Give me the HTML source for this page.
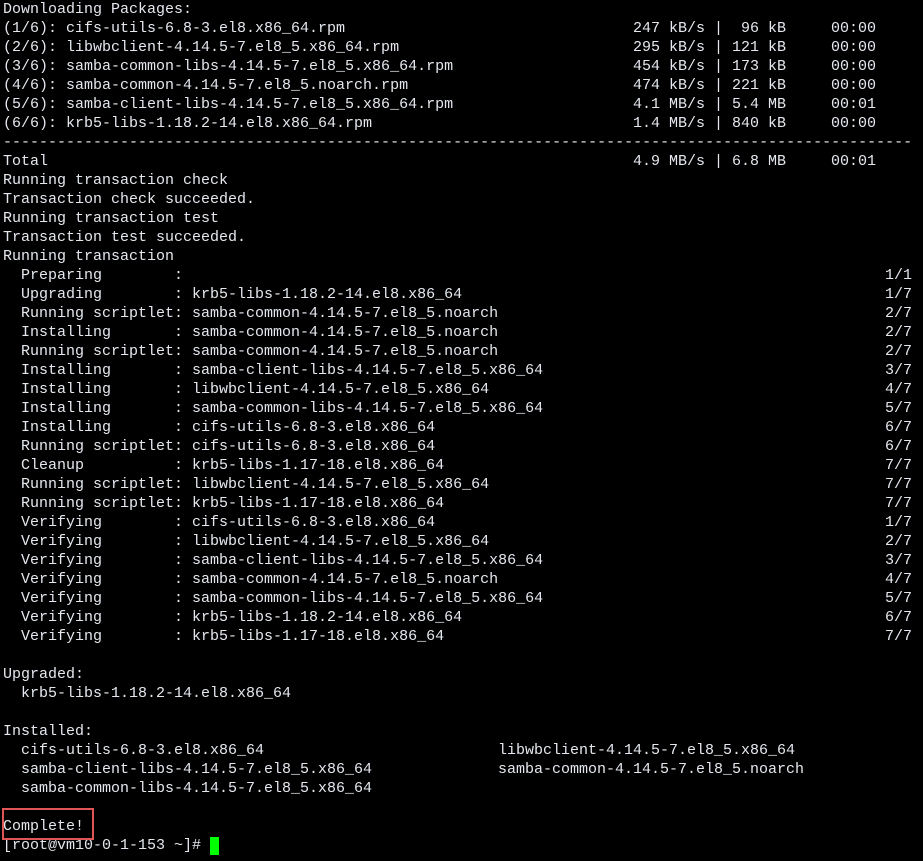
<!DOCTYPE html>
<html><head><meta charset="utf-8"><style>
html,body{margin:0;padding:0;background:#000;width:923px;height:861px;overflow:hidden}
#t{position:absolute;left:3px;top:0;font-family:"Liberation Mono",monospace;font-size:15px;color:#e4e8ee}
.l{position:relative;height:19px;line-height:19px;white-space:pre}
.r{position:absolute;top:0}
.c70{left:630px}.c98{left:882px}.c55{left:495px}
#box{position:absolute;left:2px;top:808px;width:88px;height:28px;border:2px solid #e05555}
#cur{position:absolute;left:210px;top:837px;width:9px;height:18px;background:#00ff00}
</style></head><body>
<div id="t"><div class="l">Downloading Packages:</div><div class="l">(1/6): cifs-utils-6.8-3.el8.x86_64.rpm<span class="r c70">247 kB/s |  96 kB     00:00</span></div><div class="l">(2/6): libwbclient-4.14.5-7.el8_5.x86_64.rpm<span class="r c70">295 kB/s | 121 kB     00:00</span></div><div class="l">(3/6): samba-common-libs-4.14.5-7.el8_5.x86_64.rpm<span class="r c70">454 kB/s | 173 kB     00:00</span></div><div class="l">(4/6): samba-common-4.14.5-7.el8_5.noarch.rpm<span class="r c70">474 kB/s | 221 kB     00:00</span></div><div class="l">(5/6): samba-client-libs-4.14.5-7.el8_5.x86_64.rpm<span class="r c70">4.1 MB/s | 5.4 MB     00:01</span></div><div class="l">(6/6): krb5-libs-1.18.2-14.el8.x86_64.rpm<span class="r c70">1.4 MB/s | 840 kB     00:00</span></div><div class="l">-----------------------------------------------------------------------------------------------------</div><div class="l">Total<span class="r c70">4.9 MB/s | 6.8 MB     00:01</span></div><div class="l">Running transaction check</div><div class="l">Transaction check succeeded.</div><div class="l">Running transaction test</div><div class="l">Transaction test succeeded.</div><div class="l">Running transaction</div><div class="l">  Preparing        :<span class="r c98">1/1</span></div><div class="l">  Upgrading        : krb5-libs-1.18.2-14.el8.x86_64<span class="r c98">1/7</span></div><div class="l">  Running scriptlet: samba-common-4.14.5-7.el8_5.noarch<span class="r c98">2/7</span></div><div class="l">  Installing       : samba-common-4.14.5-7.el8_5.noarch<span class="r c98">2/7</span></div><div class="l">  Running scriptlet: samba-common-4.14.5-7.el8_5.noarch<span class="r c98">2/7</span></div><div class="l">  Installing       : samba-client-libs-4.14.5-7.el8_5.x86_64<span class="r c98">3/7</span></div><div class="l">  Installing       : libwbclient-4.14.5-7.el8_5.x86_64<span class="r c98">4/7</span></div><div class="l">  Installing       : samba-common-libs-4.14.5-7.el8_5.x86_64<span class="r c98">5/7</span></div><div class="l">  Installing       : cifs-utils-6.8-3.el8.x86_64<span class="r c98">6/7</span></div><div class="l">  Running scriptlet: cifs-utils-6.8-3.el8.x86_64<span class="r c98">6/7</span></div><div class="l">  Cleanup          : krb5-libs-1.17-18.el8.x86_64<span class="r c98">7/7</span></div><div class="l">  Running scriptlet: libwbclient-4.14.5-7.el8_5.x86_64<span class="r c98">7/7</span></div><div class="l">  Running scriptlet: krb5-libs-1.17-18.el8.x86_64<span class="r c98">7/7</span></div><div class="l">  Verifying        : cifs-utils-6.8-3.el8.x86_64<span class="r c98">1/7</span></div><div class="l">  Verifying        : libwbclient-4.14.5-7.el8_5.x86_64<span class="r c98">2/7</span></div><div class="l">  Verifying        : samba-client-libs-4.14.5-7.el8_5.x86_64<span class="r c98">3/7</span></div><div class="l">  Verifying        : samba-common-4.14.5-7.el8_5.noarch<span class="r c98">4/7</span></div><div class="l">  Verifying        : samba-common-libs-4.14.5-7.el8_5.x86_64<span class="r c98">5/7</span></div><div class="l">  Verifying        : krb5-libs-1.18.2-14.el8.x86_64<span class="r c98">6/7</span></div><div class="l">  Verifying        : krb5-libs-1.17-18.el8.x86_64<span class="r c98">7/7</span></div><div class="l"> </div><div class="l">Upgraded:</div><div class="l">  krb5-libs-1.18.2-14.el8.x86_64</div><div class="l"> </div><div class="l">Installed:</div><div class="l">  cifs-utils-6.8-3.el8.x86_64<span class="r c55">libwbclient-4.14.5-7.el8_5.x86_64</span></div><div class="l">  samba-client-libs-4.14.5-7.el8_5.x86_64<span class="r c55">samba-common-4.14.5-7.el8_5.noarch</span></div><div class="l">  samba-common-libs-4.14.5-7.el8_5.x86_64</div><div class="l"> </div><div class="l">Complete!</div><div class="l">[root@vm10-0-1-153 ~]# </div></div>
<div id="box"></div>
<div id="cur"></div>
</body></html>
